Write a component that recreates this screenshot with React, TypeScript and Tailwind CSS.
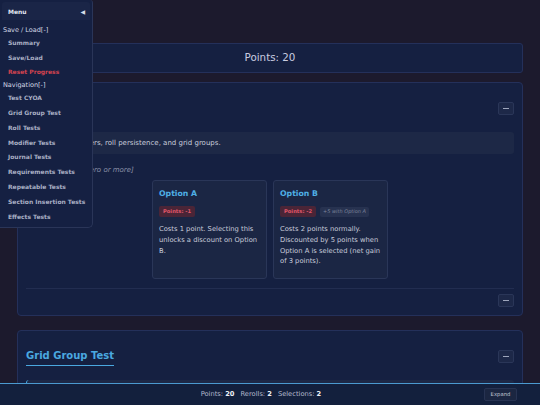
import React from "react";

function MinusBtn() {
  return (
    <div className="flex h-[13px] w-[16px] items-center justify-center rounded-[2px] border border-[#2a3658] bg-[#1d2848]">
      <div className="h-[1px] w-[6px] bg-[#9ea6bc]" />
    </div>
  );
}

function Badge({ children }: { children: React.ReactNode }) {
  return (
    <span className="inline-flex h-[11px] items-center rounded-[2px] bg-[#4a2537] px-[4px] text-[5.2px] font-bold text-[#e0566a]">
      {children}
    </span>
  );
}

function OptionCard({
  title,
  badge,
  note,
  text,
}: {
  title: string;
  badge: string;
  note?: string;
  text: string;
}) {
  return (
    <div className="h-[99px] w-[115px] rounded-[3px] border border-[#2a3658] bg-[#1b2644] pl-[6px] pr-[4px] pt-[7px]">
      <div className="text-[7.75px] font-bold leading-[12px] text-[#4fb0e6]">{title}</div>
      <div className="mt-[6px] flex items-center gap-[4px]">
        <Badge>{badge}</Badge>
        {note && (
          <span className="inline-flex h-[10px] items-center rounded-[2px] bg-[#273250] px-[3px] text-[5px] italic text-[#7d849c]">
            {note}
          </span>
        )}
      </div>
      <p className="mt-[7px] text-[6.75px] leading-[10.8px] text-[#c8ccdb]">{text}</p>
    </div>
  );
}

const navItems = [
  "Test CYOA",
  "Grid Group Test",
  "Roll Tests",
  "Modifier Tests",
  "Journal Tests",
  "Requirements Tests",
  "Repeatable Tests",
  "Section Insertion Tests",
  "Effects Tests",
];

export default function App() {
  return (
    <div className="relative h-[405px] w-full overflow-hidden bg-[#1c1a2d] font-['DejaVu_Sans',sans-serif]">
      <main className="px-[17px] pt-[43px]">
        <div className="flex h-[30px] items-center justify-center rounded-[3px] border border-[#24305a] bg-[#152041] text-[10.3px] text-[#c9cde0]">
          Points: 20
        </div>

        <section className="mt-[9px] rounded-[4px] border border-[#24305a] bg-[#152041] px-[8px] pb-[8px] pt-[14px]">
          <header className="flex h-[23px] items-center justify-between">
            <h2 className="border-b-[1.5px] border-[#4aa8e0] pb-[2px] text-[10px] font-bold text-[#4aa8e0]">
              Test CYOA
            </h2>
            <MinusBtn />
          </header>
          <div className="mt-[12px] flex h-[22px] items-center rounded-[3px] bg-[#1d2846] px-[6px] text-[7px] text-[#c8ccdb]">
            This tests modifiers, roll persistence, and grid groups.
          </div>
          <div className="mt-[11px] text-[7px] italic leading-[10px] text-[#8a90a8]">
            [Multiple choice: zero or more]
          </div>
          <div className="mt-[5px] flex justify-center gap-[6px]">
            <OptionCard
              title="Option A"
              badge="Points: -1"
              text="Costs 1 point. Selecting this unlocks a discount on Option B."
            />
            <OptionCard
              title="Option B"
              badge="Points: -2"
              note="+5 with Option A"
              text="Costs 2 points normally. Discounted by 5 points when Option A is selected (net gain of 3 points)."
            />
          </div>
          <div className="mt-[9px] border-t border-[#222d50]" />
          <div className="mt-[5px] flex justify-end">
            <MinusBtn />
          </div>
        </section>

        <section className="mt-[14px] rounded-[4px] border border-[#24305a] bg-[#152041] px-[8px] pb-[8px] pt-[14px]">
          <header className="flex h-[23px] items-center justify-between">
            <h2 className="border-b-[1.5px] border-[#4aa8e0] pb-[2px] text-[10px] font-bold text-[#4aa8e0]">
              Grid Group Test
            </h2>
            <MinusBtn />
          </header>
          <div className="mt-[12px] h-[40px] rounded-[3px] border-l-[1.5px] border-[#4aa8e0] bg-[#1d2846]" />
        </section>
      </main>

      {/* Side menu */}
      <nav className="absolute left-0 top-0 h-[228px] w-[93px] rounded-br-[5px] rounded-tr-[3px] border-b border-r border-[#2a3558] bg-[#152042]">
        <div className="mx-[2px] mt-[2px] flex h-[18px] items-center justify-between rounded-t-[3px] bg-[#1a2547] pl-[6px] pr-[5px]">
          <span className="text-[6px] font-bold text-[#e2e6f2]">Menu</span>
          <span className="text-[6px] text-[#d8dcea]">◀</span>
        </div>
        <div className="pt-[4px]">
          <div className="h-[12px] pl-[3px] text-[6.5px] leading-[12px] text-[#d4d8e6]">Save / Load[-]</div>
          <div className="h-[14.6px] pl-[8px] text-[6px] font-bold leading-[14.6px] text-[#a9afc4]">Summary</div>
          <div className="h-[14.6px] pl-[8px] text-[6px] font-bold leading-[14.6px] text-[#a9afc4]">Save/Load</div>
          <div className="h-[14.6px] pl-[8px] text-[6px] font-bold leading-[14.6px] text-[#d2434f]">Reset Progress</div>
          <div className="h-[11.5px] pl-[3px] text-[6.5px] leading-[11.5px] text-[#d4d8e6]">Navigation[-]</div>
          {navItems.map((n) => (
            <div key={n} className="h-[14.8px] pl-[8px] text-[6px] font-bold leading-[14.8px] text-[#a9afc4]">
              {n}
            </div>
          ))}
        </div>
      </nav>

      {/* Bottom bar */}
      <div className="absolute bottom-0 left-0 right-0 flex h-[22px] items-center justify-center border-t border-[#4b9ad0] bg-[#13203d] pr-[18px] text-[6.7px] text-[#b4bacd]">
        <span>
          Points: <b className="text-[#eef0f6]">20</b>
        </span>
        <span className="ml-[6px]">
          Rerolls: <b className="text-[#eef0f6]">2</b>
        </span>
        <span className="ml-[6px]">
          Selections: <b className="text-[#eef0f6]">2</b>
        </span>
        <div className="absolute right-[23px] top-[4px] flex h-[13px] w-[33px] items-center justify-center rounded-[2px] border border-[#273352] bg-[#1b2641] text-[5.3px] text-[#c2c6d4]">
          Expand
        </div>
      </div>
    </div>
  );
}
